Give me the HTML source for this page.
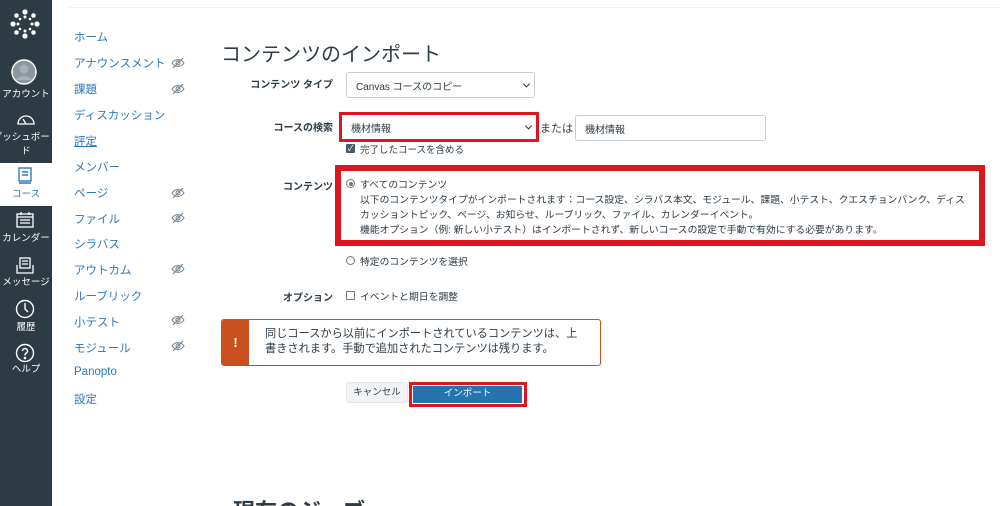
<!DOCTYPE html>
<html><head><meta charset="utf-8"><style>
*{margin:0;padding:0;box-sizing:border-box}
html,body{width:1000px;height:506px;overflow:hidden}
body{background:#fff;font-family:"Liberation Sans","Noto Sans CJK JP",sans-serif;color:#2d3b45;position:relative}
.a{position:absolute;white-space:nowrap}
#side{position:absolute;left:0;top:0;width:52px;height:506px;background:#2d3b45;overflow:hidden}
.si{position:absolute;left:-10px;width:72px;text-align:center;color:#fff;font-size:9.5px}
.nav{position:absolute;left:74px;font-size:11.5px;color:#2b7abc}
.eye{position:absolute;left:171px}
.lbl{position:absolute;font-size:10px;font-weight:bold;right:667px;color:#2d3b45}
.sel{position:absolute;border:1px solid #c7cdd1;border-radius:3px;background:#fff;font-size:10px;padding-left:9px;display:flex;align-items:center;color:#2d3b45}
.chev{position:absolute;right:5px;top:50%;width:5px;height:5px;border-right:1.5px solid #333;border-bottom:1.5px solid #333;transform:translateY(-70%) rotate(45deg)}
.t{font-size:9.5px;color:#2d3b45}
</style></head><body>
<svg width="0" height="0" style="position:absolute"><defs><g id="eye"><path d="M1 6c3-4.5 9-4.5 12 0c-3 4.5-9 4.5-12 0z" fill="none" stroke="#73818c" stroke-width="1"/><circle cx="7" cy="6" r="2" fill="none" stroke="#73818c" stroke-width="1"/><path d="M2 11L12 1" stroke="#73818c" stroke-width="1"/></g></defs></svg>
<div id="side">
 <svg class="a" style="left:9px;top:8px" width="32" height="32" viewBox="0 0 32 32" fill="#fff">
  <circle cx="16" cy="4" r="2.6"/><circle cx="16" cy="28" r="2.6"/><circle cx="4" cy="16" r="2.6"/><circle cx="28" cy="16" r="2.6"/>
  <circle cx="7.5" cy="7.5" r="2.3"/><circle cx="24.5" cy="7.5" r="2.3"/><circle cx="7.5" cy="24.5" r="2.3"/><circle cx="24.5" cy="24.5" r="2.3"/>
  <circle cx="16" cy="9" r="1.5"/><circle cx="16" cy="23" r="1.5"/><circle cx="9" cy="16" r="1.5"/><circle cx="23" cy="16" r="1.5"/>
  <circle cx="11" cy="11" r="1.3"/><circle cx="21" cy="11" r="1.3"/><circle cx="11" cy="21" r="1.3"/><circle cx="21" cy="21" r="1.3"/>
 </svg>
 <svg class="a" style="left:11px;top:59px" width="26" height="26" viewBox="0 0 26 26"><circle cx="13" cy="13" r="12" fill="#8b969e" stroke="#fff" stroke-width="1.5"/><circle cx="13" cy="10" r="4.5" fill="#a9b1b7"/><path d="M5 21c2-5 14-5 16 0" fill="#a9b1b7"/></svg>
 <div class="si" style="top:86px">アカウント</div>
 <svg class="a" style="left:16px;top:112px" width="20" height="14" viewBox="0 0 20 14" fill="none" stroke="#fff" stroke-width="1.3"><path d="M2 12a8 8 0 0 1 16 0z"/><path d="M10 12l-3-5"/></svg>
 <div class="si" style="top:129px">ダッシュボード</div>
 <div class="si" style="top:143px">ド</div>
 <div class="a" style="left:0;top:163px;width:52px;height:43px;background:#fff"></div>
 <svg class="a" style="left:17px;top:167px" width="16" height="18" viewBox="0 0 16 18" fill="none" stroke="#2b7abc" stroke-width="1.4"><rect x="2" y="1" width="12" height="13"/><path d="M2 16h12M5 5h6M5 8h6"/></svg>
 <div class="si" style="top:186px;color:#2b7abc">コース</div>
 <svg class="a" style="left:16px;top:211px" width="18" height="17" viewBox="0 0 18 17" fill="none" stroke="#fff" stroke-width="1.3"><rect x="1" y="3" width="16" height="13"/><path d="M1 6h16M5 1v3M13 1v3M4 9h10M4 12h10"/></svg>
 <div class="si" style="top:230px">カレンダー</div>
 <svg class="a" style="left:16px;top:257px" width="18" height="17" viewBox="0 0 18 17" fill="none" stroke="#fff" stroke-width="1.3"><rect x="4" y="1" width="10" height="10"/><path d="M6 4h6M6 7h6M1 8v8h16V8"/></svg>
 <div class="si" style="top:274px">メッセージ</div>
 <svg class="a" style="left:15px;top:299px" width="20" height="20" viewBox="0 0 20 20" fill="none" stroke="#fff" stroke-width="1.4"><circle cx="10" cy="10" r="8.5"/><path d="M10 4v6l3 3"/></svg>
 <div class="si" style="top:319px">履歴</div>
 <svg class="a" style="left:15px;top:343px" width="20" height="20" viewBox="0 0 20 20" fill="none" stroke="#fff" stroke-width="1.4"><circle cx="10" cy="10" r="8.5"/><path d="M7.5 8a2.5 2.5 0 1 1 3.5 2.3c-1 .5-1 1-1 2.2"/><circle cx="10" cy="15" r=".6" fill="#fff"/></svg>
 <div class="si" style="top:361px">ヘルプ</div>
</div>
<div class="a" style="left:69px;top:7px;width:931px;height:1px;background:#eef0f1"></div>

<div class="nav" style="top:29px">ホーム</div>
<div class="nav" style="top:55px">アナウンスメント</div><svg class="eye" style="top:57px" width="14" height="12"><use href="#eye"/></svg>
<div class="nav" style="top:81px">課題</div><svg class="eye" style="top:83px" width="14" height="12"><use href="#eye"/></svg>
<div class="nav" style="top:107px">ディスカッション</div>
<div class="nav" style="top:133px;text-decoration:underline">評定</div>
<div class="nav" style="top:159px">メンバー</div>
<div class="nav" style="top:185px">ページ</div><svg class="eye" style="top:187px" width="14" height="12"><use href="#eye"/></svg>
<div class="nav" style="top:211px">ファイル</div><svg class="eye" style="top:212px" width="14" height="12"><use href="#eye"/></svg>
<div class="nav" style="top:236px">シラバス</div>
<div class="nav" style="top:262px">アウトカム</div><svg class="eye" style="top:263px" width="14" height="12"><use href="#eye"/></svg>
<div class="nav" style="top:288px">ルーブリック</div>
<div class="nav" style="top:314px">小テスト</div><svg class="eye" style="top:314px" width="14" height="12"><use href="#eye"/></svg>
<div class="nav" style="top:340px">モジュール</div><svg class="eye" style="top:340px" width="14" height="12"><use href="#eye"/></svg>
<div class="nav" style="top:366px">Panopto</div>
<div class="nav" style="top:391px">設定</div>

<div class="a" style="left:221px;top:38px;font-size:20px;color:#2d3b45">コンテンツのインポート</div>

<div class="lbl" style="top:76px">コンテンツ タイプ</div>
<div class="sel" style="left:346px;top:72px;width:189px;height:26px">Canvas コースのコピー<span class="chev"></span></div>

<div class="lbl" style="top:119px">コースの検索</div>
<div class="a" style="left:339px;top:112px;width:200px;height:30px;border:3px solid #e0141e"></div>
<div class="sel" style="left:342px;top:115px;width:194px;height:24px;border:none">機材情報<span class="chev"></span></div>
<div class="a t" style="left:540px;top:120px;font-size:11px">または</div>
<div class="sel" style="left:575px;top:115px;width:191px;height:26px">機材情報</div>
<div class="a" style="left:346px;top:144px;width:9px;height:9px;background:#4a5a66;border-radius:1px;color:#fff;font-size:8px;line-height:9px;text-align:center">✓</div>
<div class="a t" style="left:360px;top:142px">完了したコースを含める</div>

<div class="lbl" style="top:178px">コンテンツ</div>
<div class="a" style="left:335px;top:165px;width:650px;height:81px;border:6px solid #e0141e"></div>
<div class="a" style="left:346px;top:179px;width:9px;height:9px;border:1px solid #777;border-radius:50%"><div style="margin:1.5px;width:4px;height:4px;border-radius:50%;background:#777"></div></div>
<div class="a t" style="left:360px;top:177px;font-size:9.8px">すべてのコンテンツ</div>
<div class="a t" style="left:360px;top:192px;font-size:9.8px">以下のコンテンツタイプがインポートされます：コース設定、シラバス本文、モジュール、課題、小テスト、クエスチョンバンク、ディス</div>
<div class="a t" style="left:360px;top:207px;font-size:9.8px">カッショントピック、ページ、お知らせ、ルーブリック、ファイル、カレンダーイベント。</div>
<div class="a t" style="left:360px;top:222px;font-size:9.8px">機能オプション（例: 新しい小テスト）はインポートされず、新しいコースの設定で手動で有効にする必要があります。</div>
<div class="a" style="left:346px;top:256px;width:9px;height:9px;border:1px solid #777;border-radius:50%"></div>
<div class="a t" style="left:360px;top:254px;font-size:9.8px">特定のコンテンツを選択</div>

<div class="lbl" style="top:289px">オプション</div>
<div class="a" style="left:346px;top:291px;width:9px;height:9px;border:1px solid #777;border-radius:1px"></div>
<div class="a t" style="left:360px;top:289px;font-size:9.8px">イベントと期日を調整</div>

<div class="a" style="left:221px;top:319px;width:380px;height:47px;border:1px solid #c8501f;border-radius:3px;overflow:hidden">
 <div style="position:absolute;left:0;top:0;width:27px;height:100%;background:#c8501f;color:#fff;font-weight:bold;font-size:13px;text-align:center;line-height:45px">!</div>
 <div class="t" style="position:absolute;left:43px;top:7px;font-size:11.2px;line-height:15px">同じコースから以前にインポートされているコンテンツは、上<br>書きされます。手動で追加されたコンテンツは残ります。</div>
</div>

<div class="a" style="left:346px;top:382px;width:62px;height:21px;background:#f2f3f4;border:1px solid #e3e5e7;border-radius:3px;font-size:9.5px;text-align:center;line-height:19px">キャンセル</div>
<div class="a" style="left:409px;top:382px;width:118px;height:25px;border:3px solid #e0141e"></div>
<div class="a" style="left:413px;top:386px;width:109px;height:17px;background:#2773b0;color:#fff;font-size:9.5px;text-align:center;line-height:16px">インポート</div>

<div class="a" style="left:233px;top:494px;font-size:22px;font-weight:bold;color:#2d3b45">現在のジョブ</div>
</body></html>
